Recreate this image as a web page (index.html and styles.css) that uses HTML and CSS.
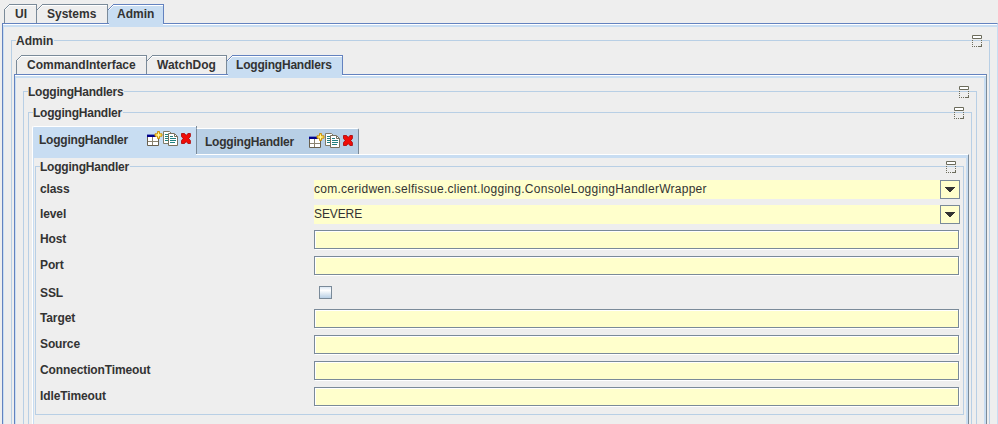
FILE: index.html
```
<!DOCTYPE html>
<html lang="en">
<head>
<meta charset="utf-8">
<title>Admin</title>
<link rel="stylesheet" href="styles.css">
</head>
<body>
<svg width="0" height="0" class="defs" aria-hidden="true">
  <symbol id="fold" viewBox="0 0 10 12">
    <path fill="#fff" d="M1 1h8v2H1z"/>
    <path fill="none" stroke="#6c6c5c" d="M.5.5h9v3h-9z"/>
    <path fill="none" stroke="#6c6c5c" stroke-dasharray="1 1" d="M.5 5v7M9.5 5v7M0 11.5h10"/>
    <path fill="#6c6c5c" d="M7 11h2v-1h1v2H7z"/>
  </symbol>
  <symbol id="corner" viewBox="0 0 6 6">
    <path fill="#eee" d="M0 0h6v1H5v1H4v1H3v1H2v1H1v1H0z"/>
    <path fill="none" stroke="currentColor" d="M0 5.5h1M1 4.5h1M2 3.5h1M3 2.5h1M4 1.5h1M5 .5h1"/>
    <path fill="none" stroke="#fff" d="M1 5.5h1M2 4.5h1M3 3.5h1M4 2.5h1M5 1.5h1"/>
  </symbol>
  <symbol id="actions" viewBox="0 0 46 16">
    <path fill="#fff" stroke="#68604f" d="M.5 4.500h11v10h-11z"/>
    <path fill="#00008b" d="M0 3h9v3H0z"/><path fill="#7085ca" d="M0 3h8v1H0z"/>
    <path stroke="#8a8371" fill="none" d="M5.500 6v8M1 10.500h10"/>
    <path fill="#ffdf40" stroke="#c88a08" stroke-width=".9" d="M10.500 .5h2v2.300h2.500v2.400h-2.500v2.300h-2V5.200H8V2.800h2.500z"/>
    <path fill="#fff6a0" d="M11 2h1v4h-1zM9.500 3.500h4v1h-4z"/>
    <path fill="#fff" stroke="#807b68" d="M16.500 .5h6l2 2v10h-8z"/>
    <path stroke="#208080" fill="none" d="M18 3.500h3M18 5.500h3M18 7.500h3M18 9.500h3"/>
    <path fill="#fff" stroke="#77705d" d="M21.500 2.500h6l3 3v9h-9z"/>
    <path stroke="#77705d" fill="none" d="M27.500 3v2.500h3"/>
    <path stroke="#208080" fill="none" d="M23 5.500h3M23 7.500h6M23 9.500h6M23 11.500h5"/>
    <path fill="#f00c08" stroke="#a80000" stroke-width=".8" d="M35 2.500h2.500l1.700 2 1.700-2h2.500V5.500l-1.700 2 1.700 2v3h-2.500l-1.700-2-1.700 2H34.500v-3l1.700-2-1.700-2V2.500z"/>
  </symbol>
</svg>
<main class="window">
  <nav class="tabs tabs-main">
    <span class="tab first ui"><svg class="corner"><use href="#corner"/></svg>UI</span>
    <span class="tab systems"><svg class="corner"><use href="#corner"/></svg>Systems</span>
    <span class="tab selected admin"><svg class="corner"><use href="#corner"/></svg>Admin</span>
  </nav>
  <section class="pane pane-main">
    <div class="group group-admin">
      <h2 class="title">Admin</h2><svg class="fold"><use href="#fold"/></svg>
      <nav class="tabs tabs-sub">
        <span class="tab first command"><svg class="corner"><use href="#corner"/></svg>CommandInterface</span>
        <span class="tab watchdog"><svg class="corner"><use href="#corner"/></svg>WatchDog</span>
        <span class="tab selected handlers"><svg class="corner"><use href="#corner"/></svg>LoggingHandlers</span>
      </nav>
      <section class="pane pane-sub">
        <div class="group group-handlers">
          <h2 class="title tight">LoggingHandlers</h2><svg class="fold"><use href="#fold"/></svg>
          <div class="group group-handler">
            <h2 class="title tight">LoggingHandler</h2><svg class="fold"><use href="#fold"/></svg>
            <nav class="cards">
              <span class="card current"><span class="tight">LoggingHandler</span><svg class="actions"><use href="#actions"/></svg></span>
              <span class="card other"><span class="tight">LoggingHandler</span><svg class="actions"><use href="#actions"/></svg></span>
            </nav>
            <section class="card-pane">
              <div class="group group-form">
                <h2 class="title tight">LoggingHandler</h2><svg class="fold"><use href="#fold"/></svg>
                <div class="row combo-row"><label>class</label><div class="combo"><span class="value-class">com.ceridwen.selfissue.client.logging.ConsoleLoggingHandlerWrapper</span><i class="arrow"><svg viewBox="0 0 10 5"><path d="M0 0h10v1H9v1H8v1H7v1H6v1H4V4H3V3H2V2H1V1H0z"/></svg></i></div></div>
                <div class="row combo-row"><label>level</label><div class="combo"><span class="value-level">SEVERE</span><i class="arrow"><svg viewBox="0 0 10 5"><path d="M0 0h10v1H9v1H8v1H7v1H6v1H4V4H3V3H2V2H1V1H0z"/></svg></i></div></div>
                <div class="row"><label>Host</label><div class="field"></div></div>
                <div class="row"><label>Port</label><div class="field"></div></div>
                <div class="row check-row"><label>SSL</label><div class="check"></div></div>
                <div class="row"><label>Target</label><div class="field"></div></div>
                <div class="row"><label>Source</label><div class="field"></div></div>
                <div class="row"><label>ConnectionTimeout</label><div class="field"></div></div>
                <div class="row"><label>IdleTimeout</label><div class="field"></div></div>
              </div>
            </section>
          </div>
        </div>
      </section>
    </div>
  </section>
</main>
</body>
</html>
```
FILE: styles.css
```
* { box-sizing: border-box; }
html, body { margin: 0; height: 424px; overflow: hidden; background: #eee; }
body { font: bold 12px/14px "Liberation Sans", Arial, sans-serif; color: #333; }
.defs { position: absolute; }
.window { height: 424px; overflow: hidden; padding: 4px 0 0 2px; }

/* Tabs */
.tabs { display: flex; height: 19px; }
.tabs-main { padding-left: 2px; }
.tabs-sub { padding-left: 2px; }
.tab {
  position: relative; height: 19px; padding: 2px 0 0 10px; white-space: nowrap;
  color: #333; border-top: 1px solid #7a8a99; border-right: 1px solid #7a8a99;
  box-shadow: inset 0 1px #fff;
}
.tab.first { border-left: 1px solid #7a8a99; }
.tab.selected { background: #c8ddf2; border-color: #6382bf; }
.tab.selected::after {
  content: ""; position: absolute; left: 1px; right: 0; top: 18px; height: 3px; background: #c8ddf2;
}
.corner { position: absolute; left: 0; top: -1px; width: 6px; height: 6px; color: #7a8a99; }
.first .corner { left: -1px; }
.selected .corner { color: #6382bf; }
.ui { width: 33px; }
.systems { width: 71px; }
.admin { width: 56px; padding-left: 9px; }
.command { width: 131px; }
.watchdog { width: 80px; }
.handlers { width: 116px; padding-left: 9px; letter-spacing: -.2px; }
.tight { letter-spacing: -.22px; }

/* Tab panes */
.pane { border-top: 1px solid #6382bf; border-left: 1px solid #6382bf; }
.pane-main {
  width: 996px; height: 440px; padding: 16px 0 0 8px; border-right: 1px solid #c8ddf2;
  box-shadow: inset 0 1px #fff, inset 1px 3px #c8ddf2;
}
.pane-sub {
  width: 973px; height: 400px; padding: 16px 0 0 8px; border-right: 1px solid #7a8a99;
  box-shadow: inset 0 1px #fff, inset 1px 3px #c8ddf2, inset -2px 0 #c8ddf2;
}

/* Titled groups */
.group { position: relative; border: 1px solid #b8cfe5; }
.title {
  position: absolute; top: -7px; left: 4px; margin: 0; padding-right: 1px;
  font: inherit; background: #eee;
}
.fold { position: absolute; width: 10px; height: 12px; top: -6px; right: 7px; }
.group-admin { width: 979px; height: 420px; padding: 14px 0 0 2px; }
.group-handlers { width: 954px; height: 360px; padding: 20px 0 0 4px; }
.group-handler { width: 944px; height: 330px; padding: 13px 0 0 3px; }
.group-form { width: 929px; height: 249px; padding: 13px 0 0 4px; }

/* Handler cards */
.cards { display: flex; align-items: flex-end; height: 28px; }
.card { display: flex; position: relative; }
.card.current {
  width: 164px; height: 28px; padding: 6px 0 0 6px; background: #c8ddf2;
  border-top: 1px solid #fff; border-left: 1px solid #fff; border-radius: 2px 0 0 0;
  box-shadow: 1px 0 #7a8a99;
}
.card.other {
  width: 163px; height: 26px; padding: 6px 0 0 8px; background: #b8cfe5;
  border-top: 1px solid #fff; border-right: 1px solid #7a8a99; border-left: 1px solid #7a8a99;
  border-radius: 0 2px 0 0;
}
.card > span { width: 108px; }
.card.other > span { width: 104px; }
.actions { width: 46px; height: 16px; margin-top: -2px; }
.card-pane {
  position: relative; width: 937px; height: 300px; padding: 11px 0 0 3px;
  border-top: 1px solid #fff; border-right: 1px solid #7a8a99;
  box-shadow: inset 1px 0 #fff, inset 2px 3px #c8ddf2, inset -2px 0 #c8ddf2;
}
.card-pane::before {
  content: ""; position: absolute; left: 1px; top: -1px; width: 163px; height: 1px; background: #c8ddf2;
}

/* Form */
.row { display: flex; height: 26px; }
.row label { width: 274px; padding-top: 2px; letter-spacing: -.12px; }
.combo-row { height: 25px; }
.combo {
  display: flex; justify-content: space-between; width: 646px; height: 19px;
  font-weight: normal; line-height: 19px; background: #ffffcc;
}
.value-class { letter-spacing: .265px; }
.value-level { letter-spacing: -.1px; }
.arrow {
  display: flex; align-items: center; justify-content: center;
  width: 20px; height: 19px; border: 1px solid #7a8a99;
}
.arrow svg { display: block; width: 10px; height: 5px; fill: #333; }
.field {
  width: 645px; height: 19px; background: #ffffcc; border: 1px solid #7a8a99;
  box-shadow: inset 1px 1px #fff, 1px 1px #fff;
}
.check-row { height: 27px; }
.check-row label { padding-top: 4px; }
.check {
  width: 13px; height: 13px; margin: 4px 0 0 5px; border: 1px solid #7a8a99;
  background: linear-gradient(#dce8f4, #fff 30%, #b8cfe5);
}
```
